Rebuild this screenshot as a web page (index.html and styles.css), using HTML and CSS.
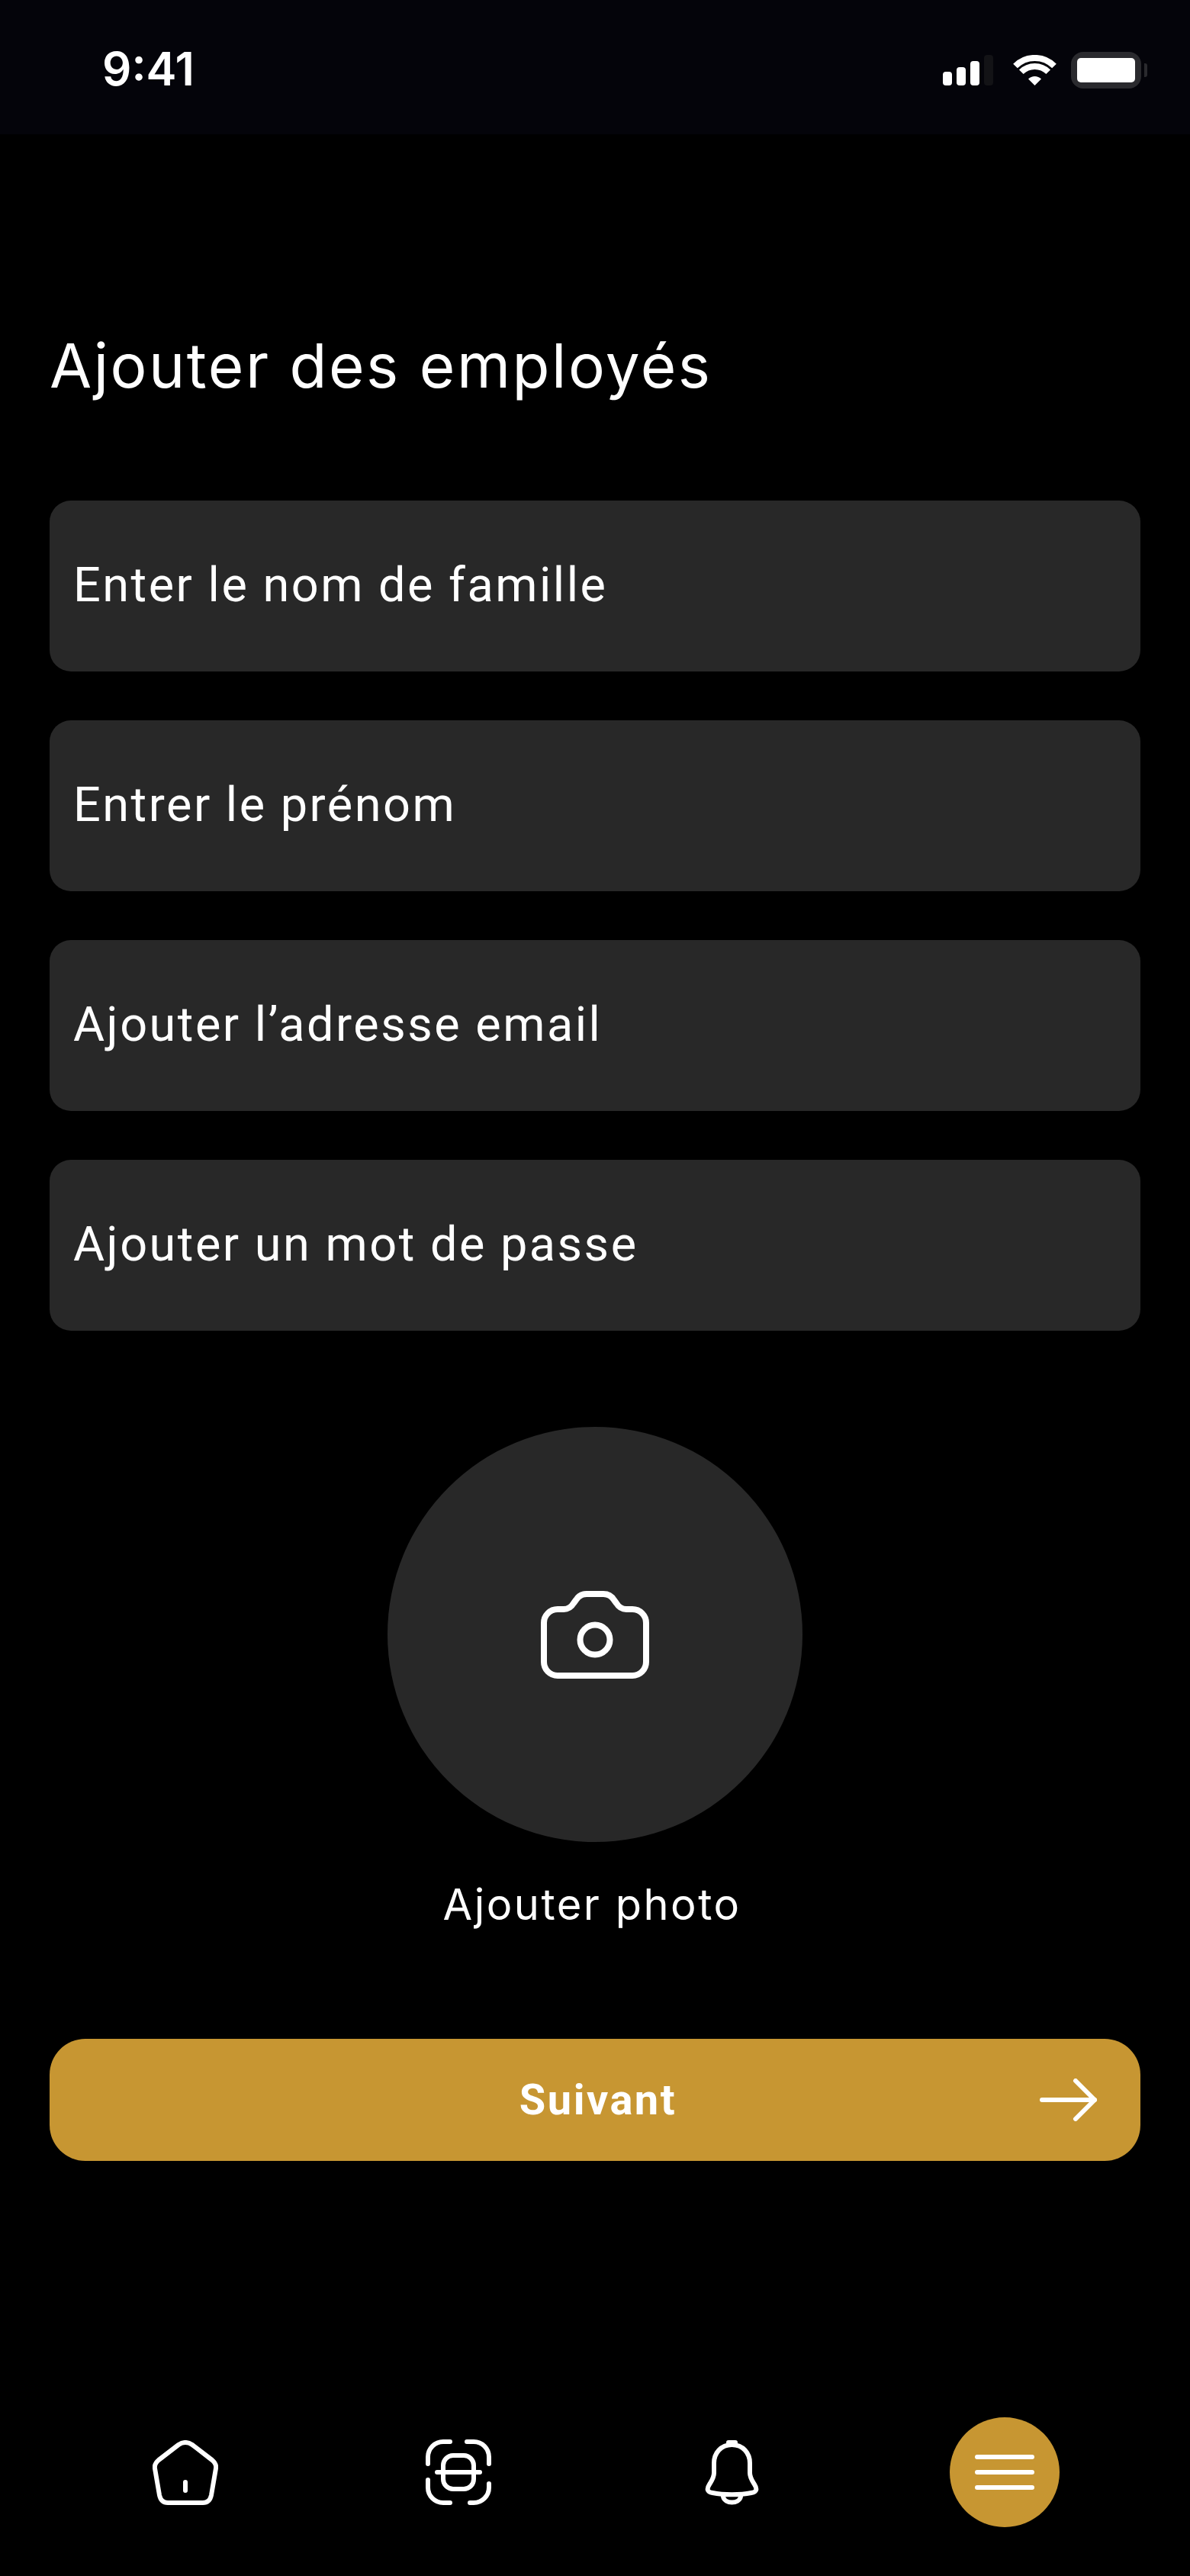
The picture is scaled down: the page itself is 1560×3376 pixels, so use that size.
FILE: index.html
```html
<!DOCTYPE html>
<html lang="fr">
<head>
    <meta charset="UTF-8" />
    <meta name="viewport" content="width=device-width, initial-scale=1.0" />
    <title>Ajouter des employés</title>
    <link rel="stylesheet" href="styles.css">
</head>
<body>
    <div class="screen">
        <!-- Status bar -->
        <header class="status-bar">
            <span class="status-time">9:41</span>
            <div class="status-icons">
                <div class="signal">
                    <span class="bar bar-1"></span>
                    <span class="bar bar-2"></span>
                    <span class="bar bar-3"></span>
                    <span class="bar bar-4"></span>
                </div>
                <svg class="wifi" width="57" height="40" viewBox="0 0 57 40" fill="none" stroke="#fff" stroke-width="8">
                    <path d="M3 14.5A36 36 0 0 1 54 14.5" />
                    <path d="M10.8 22.3A25 25 0 0 1 46.2 22.3" />
                    <path d="M28.5 40L20 31.5A12 12 0 0 1 37 31.5Z" fill="#fff" stroke="none" />
                </svg>
                <div class="battery">
                    <span class="battery-level"></span>
                    <span class="battery-cap"></span>
                </div>
            </div>
        </header>

        <main class="content">
            <h1 class="page-title">Ajouter des employés</h1>

            <div class="form-fields">
                <div class="field">Enter le nom de famille</div>
                <div class="field">Entrer le prénom</div>
                <div class="field">Ajouter l’adresse email</div>
                <div class="field">Ajouter un mot de passe</div>
            </div>

            <!-- Photo upload -->
            <div class="photo-upload">
                <div class="photo-circle">
                    <svg width="142" height="115" viewBox="0 0 142 115" fill="none" stroke="#fff" stroke-width="8">
                        <path d="M22 24H30C36 24 40 21 43 16L46 12C49 7 53 4 60 4H82C89 4 93 7 96 12L99 16C102 21 106 24 112 24H120C130 24 138 32 138 42V93C138 103 130 111 120 111H22C12 111 4 103 4 93V42C4 32 12 24 22 24Z" />
                        <circle cx="71" cy="64" r="19.5" />
                    </svg>
                </div>
                <div class="photo-label">Ajouter photo</div>
            </div>

            <button class="next-button">
                <span>Suivant</span>
                <svg class="next-arrow" width="76" height="56" viewBox="0 0 76 56" fill="none" stroke="#fff" stroke-width="6" stroke-linecap="round" stroke-linejoin="round">
                    <path d="M3 28H72" />
                    <path d="M47 3L72 28L47 53" />
                </svg>
            </button>
        </main>

        <!-- Bottom navigation -->
        <nav class="bottom-nav">
            <div class="nav-item">
                <svg width="86" height="85" viewBox="0 0 86 85" fill="none" stroke="#fff" stroke-width="6" stroke-linecap="round" stroke-linejoin="round">
                    <path d="M34 6Q43 0 52 6L78 26Q84 31 83 37L77 72Q75 82 66 82H20Q11 82 9 72L3 37Q2 31 8 26Z" />
                    <path d="M43 55V66" />
                </svg>
            </div>
            <div class="nav-item">
                <svg width="86" height="86" viewBox="0 0 86 86" fill="none" stroke="#fff" stroke-width="6" stroke-linecap="round" stroke-linejoin="round">
                    <path d="M3 32V23A20 20 0 0 1 23 3H32" />
                    <path d="M54 3H63A20 20 0 0 1 83 23V32" />
                    <path d="M83 58V63A20 20 0 0 1 63 83H58" />
                    <path d="M3 53V63A20 20 0 0 0 23 83H32" />
                    <rect x="23" y="21" width="40" height="44" rx="13" />
                    <path d="M15 43H71" />
                </svg>
            </div>
            <div class="nav-item">
                <svg width="71" height="86" viewBox="0 0 71 86" fill="none" stroke="#fff" stroke-width="6" stroke-linecap="round" stroke-linejoin="round">
                    <path d="M35.5 7C21 7 12 18 12 31V44C12 50 9 54 6 59C2 65 3 69 10 70C25 73 46 73 61 70C68 69 69 65 65 59C62 54 59 50 59 44V31C59 18 50 7 35.5 7Z" />
                    <path d="M31 4H40" />
                    <path d="M24 75C26 85 45 85 47 75" />
                </svg>
            </div>
            <div class="nav-item">
                <div class="menu-button">
                    <span class="menu-line"></span>
                    <span class="menu-line"></span>
                    <span class="menu-line"></span>
                </div>
            </div>
        </nav>
    </div>
</body>
</html>
```

FILE: styles.css
```css
/* === Reset === */
body, h1 {
    margin: 0;
    padding: 0;
}

body {
    font-family: "Inter", sans-serif;
    background: #000;
    color: #fff;
}

.screen {
    display: flex;
    flex-direction: column;
    width: 1560px;
    height: 3376px;
}

/* === Status bar === */
.status-bar {
    display: flex;
    align-items: center;
    justify-content: space-between;
    box-sizing: border-box;
    height: 176px;
    padding: 0 64px 0 134px;
    background: #04040a;
}

.status-time {
    margin-top: 4px;
    font-size: 60px;
    font-weight: 600;
    line-height: 60px;
}

.status-icons {
    display: flex;
    align-items: flex-end;
    gap: 19px;
    margin-top: 8px;
}

.signal {
    display: flex;
    align-items: flex-end;
    gap: 6px;
    height: 40px;
    margin-bottom: 4px;
}

.bar {
    width: 12px;
    background: #fff;
    border-radius: 4px;
}

.bar-1 { height: 18px; }
.bar-2 { height: 24px; }
.bar-3 { height: 32px; }
.bar-4 { height: 40px; background: #131316; }

.wifi {
    margin-bottom: 4px;
    margin-left: 7px;
}

.battery {
    position: relative;
    box-sizing: border-box;
    width: 92px;
    height: 48px;
    border: 8px solid #2a2a2e;
    border-radius: 16px;
}

.battery-level {
    display: block;
    width: 76px;
    height: 32px;
    background: #fff;
    border-radius: 5px;
}

.battery-cap {
    position: absolute;
    top: 7px;
    right: -16px;
    width: 4px;
    height: 18px;
    background: #2a2a2e;
    border-radius: 0 3px 3px 0;
}

/* === Content === */
.content {
    flex: 1;
    padding: 0 65px;
}

.page-title {
    margin-top: 255px;
    margin-bottom: 129px;
    font-size: 80px;
    font-weight: 400;
    line-height: 96px;
    letter-spacing: 2.5px;
}

.form-fields {
    display: flex;
    flex-direction: column;
    gap: 64px;
}

.field {
    display: flex;
    align-items: center;
    box-sizing: border-box;
    height: 224px;
    padding: 0 31px 4px;
    background: #282828;
    border-radius: 28px;
    font-family: "Roboto", sans-serif;
    font-size: 63px;
    letter-spacing: 2.5px;
}

/* === Photo === */
.photo-upload {
    display: flex;
    flex-direction: column;
    align-items: center;
    margin-top: 126px;
}

.photo-circle {
    display: flex;
    align-items: center;
    justify-content: center;
    width: 544px;
    height: 544px;
    background: #282828;
    border-radius: 50%;
}

.photo-label {
    margin-top: 46px;
    margin-right: 8px;
    font-size: 56px;
    line-height: 72px;
    letter-spacing: 2.5px;
}

/* === Next button === */
.next-button {
    position: relative;
    display: block;
    width: 100%;
    height: 160px;
    margin-top: 140px;
    padding-left: 14px;
    background: #c79632;
    border: none;
    border-radius: 47px;
    color: #fff;
    font-family: "Roboto", sans-serif;
    font-size: 56px;
    font-weight: 700;
    letter-spacing: 2.5px;
}

.next-arrow {
    position: absolute;
    top: 52px;
    right: 56px;
}

/* === Bottom nav === */
.bottom-nav {
    display: grid;
    grid-template-columns: repeat(4, 358px);
    height: 144px;
    padding: 0 64px 64px;
}

.nav-item {
    display: flex;
    align-items: center;
    justify-content: center;
}

.menu-button {
    display: flex;
    flex-direction: column;
    align-items: center;
    justify-content: center;
    gap: 14px;
    width: 144px;
    height: 144px;
    background: #c79632;
    border-radius: 50%;
}

.menu-line {
    width: 78px;
    height: 6px;
    background: #fff;
    border-radius: 3px;
}
```
